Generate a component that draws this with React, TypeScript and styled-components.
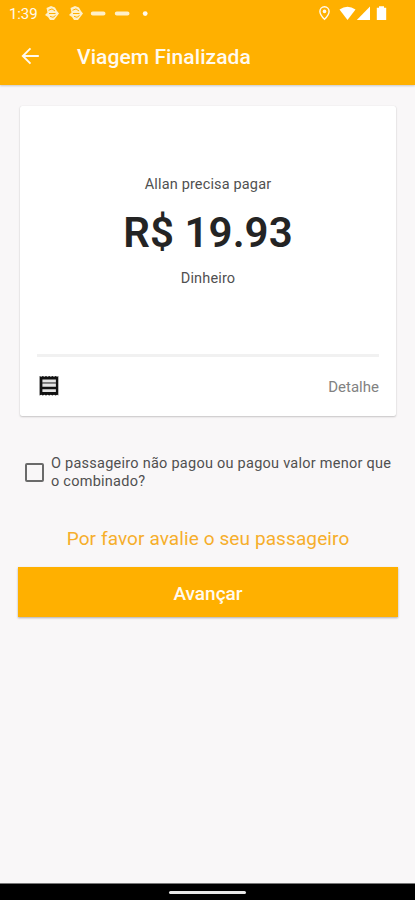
import React from "react";
import styled, { createGlobalStyle } from "styled-components";

const GlobalStyle = createGlobalStyle`
  * { box-sizing: border-box; }
  body { margin: 0; background: #f9f7f8; font-family: Roboto, "Liberation Sans", sans-serif; }
`;

const Screen = styled.div`
  width: 415px;
  height: 900px;
  display: flex;
  flex-direction: column;
  overflow: hidden;
  background: #f9f7f8;
`;

const Header = styled.header`
  height: 85px;
  flex: none;
  background: #ffb000;
  color: #fffaf0;
  box-shadow: 0 1px 2px rgba(0, 0, 0, 0.2);
`;

const StatusBar = styled.div`
  height: 28px;
  padding: 0 28px 0 9px;
  display: flex;
  align-items: center;
  justify-content: space-between;
`;

const Clock = styled.span`
  width: 35px;
  font-size: 15px;
  line-height: 28px;
  letter-spacing: -0.1px;
`;

const StatusGroup = styled.div`
  display: flex;
  align-items: center;
`;

const AppBar = styled.div`
  height: 57px;
  padding-left: 20px;
  display: flex;
  align-items: center;
`;

const BackButton = styled.button`
  width: 57px;
  height: 40px;
  padding: 0 0 2px;
  border: 0;
  background: none;
  color: inherit;
  display: flex;
  align-items: center;
`;

const Title = styled.h1`
  margin: 0;
  font-size: 21px;
  font-weight: 500;
  line-height: 28px;
  letter-spacing: 0.08px;
  white-space: nowrap;
`;

const Content = styled.main`
  flex: 1;
  display: flex;
  flex-direction: column;
  padding: 21px 17px 0 18px;
`;

const Card = styled.section`
  height: 310px;
  margin: 0 2px;
  padding: 0 17px;
  background: #fff;
  border-radius: 2px;
  box-shadow: 0 1px 2px rgba(0, 0, 0, 0.2), 0 0 1px rgba(0, 0, 0, 0.12);
  display: flex;
  flex-direction: column;
`;

const Payment = styled.div`
  height: 251px;
  padding-top: 69px;
  border-bottom: 3px solid #f1f1f1;
  display: flex;
  flex-direction: column;
  align-items: center;
`;

const Caption = styled.p`
  margin: 0;
  color: #505050;
  font-size: 14.5px;
  line-height: 20px;
  letter-spacing: 0.15px;
`;

const Amount = styled.strong`
  margin: 13px 0 11px;
  color: #242424;
  font-size: 42px;
  font-weight: 600;
  line-height: 50px;
  letter-spacing: 0.05px;
  white-space: nowrap;
`;

const CardFooter = styled.div`
  height: 58px;
  padding-left: 2px;
  display: flex;
  align-items: center;
  justify-content: space-between;
`;

const DetailLink = styled.span`
  padding-top: 2px;
  color: #828282;
  font-size: 15px;
  letter-spacing: 0.02px;
`;

const CheckRow = styled.label`
  margin: 39px 0 0 7px;
  display: flex;
  align-items: center;
  gap: 7px;
`;

const CheckBox = styled.span`
  width: 19px;
  height: 19px;
  flex: none;
  margin-bottom: 2px;
  border: 2px solid #6a6a6a;
  border-radius: 2px;
`;

const CheckText = styled.span`
  color: #505050;
  font-size: 14.5px;
  line-height: 18px;
  letter-spacing: 0.25px;
  white-space: nowrap;
`;

const RatePrompt = styled.p`
  margin: 36px 0 16px;
  color: #f6ae2b;
  font-size: 19px;
  line-height: 24px;
  letter-spacing: 0.1px;
  text-align: center;
`;

const NextButton = styled.button`
  height: 50px;
  padding: 2px 0 0;
  border: 0;
  background: #ffb000;
  color: #fffaf0;
  font: 500 19px Roboto, "Liberation Sans", sans-serif;
  box-shadow: 0 1px 2px rgba(0, 0, 0, 0.3);
`;

const NavBar = styled.footer`
  height: 17px;
  flex: none;
  background: #000;
  border-top: 1px solid #777;
  display: flex;
  align-items: center;
  justify-content: center;
`;

const HomeHandle = styled.span`
  width: 77px;
  height: 3px;
  border-radius: 2px;
  background: #e8e8e8;
`;

const NotificationIcons = () => (
  <svg width="106" height="18" viewBox="44 5 106 18" fill="none">
    {[52, 76].map((x) => (
      <g key={x} transform={`translate(${x} 13.5)`}>
        <path d="M-5.5-5.5-1-7.5 3-6 5-2.5 7 0 2 6.5-2 6.5-4 3.5-7 1.5-4.5-1Z" fill="#fff0c9" />
        <path d="M-3.5-3.2 0-4.6 3-2.5M-3 0H3.5M-2 2.8 1 3.8 3.5 2" stroke="#ffb000" strokeWidth="1" />
      </g>
    ))}
    <path d="M92.8 13.5H103.5M116.8 13.5H127.5" stroke="#fff0c9" strokeWidth="4" strokeLinecap="round" />
    <circle cx="145.2" cy="13.6" r="2.4" fill="#fffaf0" />
  </svg>
);

const SystemIcons = () => (
  <svg width="70" height="18" viewBox="317 5 70 18" fill="none">
    <path
      d="M324.5 6.8c-2.7 0-4.6 2-4.6 4.6 0 3.3 4.6 7.8 4.6 7.8s4.6-4.5 4.6-7.8c0-2.6-1.9-4.6-4.6-4.6Z"
      stroke="#fffaf0"
      strokeWidth="1.4"
    />
    <circle cx="324.5" cy="11.4" r="1.8" fill="#fffaf0" />
    <path d="M339.5 9.5Q347.5 4 355.5 9.5L347.5 20Z" fill="#fff" />
    <path d="M370 6.5V20H356.8Z" fill="#fff" />
    <path d="M379 6.2h5v1.6h2.2V20h-9.4V7.8h2.2Z" fill="#fff" />
  </svg>
);

const BackIcon = () => (
  <svg width="22" height="22" viewBox="0 0 22 22" fill="none">
    <path d="M18.8 11H3M10.5 3.3 2.8 11l7.7 7.7" stroke="#fffaf0" strokeWidth="1.9" />
  </svg>
);

const ReceiptIcon = () => (
  <svg width="20" height="22" viewBox="-0.4 0.2 20 22">
    <path
      d="M.2 1.2 1.8 2 3.4 1.2 5 2 6.6 1.2 8.2 2 9.8 1.2 11.4 2 13 1.2 14.6 2 16.2 1.2 17.8 2 18.9 1.2V20.8L17.8 20 16.2 20.8 14.6 20 13 20.8 11.4 20 9.8 20.8 8.2 20 6.6 20.8 5 20 3.4 20.8 1.8 20 .2 20.8Z"
      fill="#111"
    />
    <path d="M3 6H16.5M3 10.6H16.5M3 15.8H16.5" stroke="#e4e4e4" strokeWidth="2.8" />
    <path d="M3 8.3H16.5" stroke="#858585" strokeWidth="1.8" />
  </svg>
);

export default function App() {
  return (
    <>
      <GlobalStyle />
      <Screen>
        <Header>
          <StatusBar>
            <StatusGroup>
              <Clock>1:39</Clock>
              <NotificationIcons />
            </StatusGroup>
            <SystemIcons />
          </StatusBar>
          <AppBar>
            <BackButton aria-label="Voltar">
              <BackIcon />
            </BackButton>
            <Title>Viagem Finalizada</Title>
          </AppBar>
        </Header>
        <Content>
          <Card>
            <Payment>
              <Caption>Allan precisa pagar</Caption>
              <Amount>R$ 19.93</Amount>
              <Caption>Dinheiro</Caption>
            </Payment>
            <CardFooter>
              <ReceiptIcon />
              <DetailLink>Detalhe</DetailLink>
            </CardFooter>
          </Card>
          <CheckRow>
            <CheckBox />
            <CheckText>
              O passageiro não pagou ou pagou valor menor que
              <br />o combinado?
            </CheckText>
          </CheckRow>
          <RatePrompt>Por favor avalie o seu passageiro</RatePrompt>
          <NextButton>Avançar</NextButton>
        </Content>
        <NavBar>
          <HomeHandle />
        </NavBar>
      </Screen>
    </>
  );
}
